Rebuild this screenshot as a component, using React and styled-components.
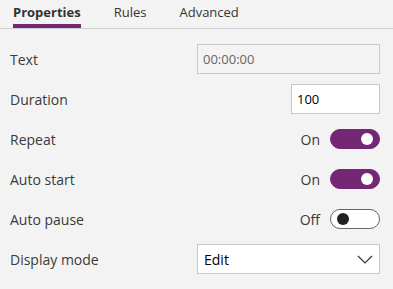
import React, { useState } from 'react';
import styled, { createGlobalStyle } from 'styled-components';

const GlobalStyle = createGlobalStyle`
  html, body {
    margin: 0;
    padding: 0;
    background: #f3f3f3;
  }
  body {
    font-family: "Open Sans", "Noto Sans", sans-serif;
    color: #333;
  }
`;

const Panel = styled.div`
  width: 393px;
  height: 289px;
  background: #f3f3f3;
  overflow: hidden;
`;

const TabBar = styled.div`
  display: flex;
  gap: 33px;
  height: 28px;
  padding-left: 13px;
  border-bottom: 1px solid #d0d0d0;
`;

const Tab = styled.div`
  font-size: 13px;
  line-height: 24px;
  font-weight: ${(p) => (p.active ? 700 : 400)};
  color: #333;
  cursor: pointer;

  &::after {
    content: '';
    display: ${(p) => (p.active ? 'block' : 'none')};
    height: 4px;
    background: #742774;
  }
`;

const Content = styled.div`
  padding: 10px 13px 0 10px;
`;

const Row = styled.div`
  display: flex;
  align-items: center;
  justify-content: space-between;
  height: 40px;
`;

const Label = styled.span`
  font-size: 14px;
  color: #3a3a3a;
`;

const TextBox = styled.input`
  box-sizing: border-box;
  width: ${(p) => p.width}px;
  height: 30px;
  padding: 0 5px;
  border: 1px solid #c8c8c8;
  background: ${(p) => (p.disabled ? '#f3f3f3' : '#fff')};
  color: ${(p) => (p.disabled ? '#666' : '#000')};
  font-family: inherit;
  font-size: 13px;
  outline: none;
`;

const ToggleWrap = styled.div`
  display: flex;
  align-items: center;
  gap: 10px;
  font-size: 14px;
  color: #3a3a3a;
`;

const Track = styled.button`
  position: relative;
  box-sizing: border-box;
  width: 50px;
  height: 20px;
  padding: 0;
  border-radius: 10px;
  border: 1px solid ${(p) => (p.on ? '#742774' : '#666')};
  background: ${(p) => (p.on ? '#742774' : '#fff')};
  cursor: pointer;
`;

const Knob = styled.span`
  position: absolute;
  top: 3px;
  left: ${(p) => (p.on ? '30px' : '6px')};
  width: 12px;
  height: 12px;
  border-radius: 50%;
  background: ${(p) => (p.on ? '#fff' : '#222')};
`;

const Select = styled.div`
  box-sizing: border-box;
  width: 183px;
  height: 30px;
  display: flex;
  align-items: center;
  justify-content: space-between;
  padding: 0 6px 0 6px;
  border: 1px solid #c8c8c8;
  background: #fff;
  font-size: 14px;
  color: #000;
`;

const Toggle = ({ on, onChange }) => (
  <ToggleWrap>
    {on ? 'On' : 'Off'}
    <Track on={on} onClick={() => onChange(!on)}>
      <Knob on={on} />
    </Track>
  </ToggleWrap>
);

const Chevron = () => (
  <svg width="16" height="9" viewBox="0 0 16 9">
    <path d="M1 1 L8 8 L15 1" fill="none" stroke="#333" strokeWidth="1.2" />
  </svg>
);

const App = () => {
  const [duration, setDuration] = useState('100');
  const [repeat, setRepeat] = useState(true);
  const [autoStart, setAutoStart] = useState(true);
  const [autoPause, setAutoPause] = useState(false);

  return (
    <Panel>
      <GlobalStyle />
      <TabBar>
        <Tab active>Properties</Tab>
        <Tab>Rules</Tab>
        <Tab>Advanced</Tab>
      </TabBar>
      <Content>
        <Row>
          <Label>Text</Label>
          <TextBox width={183} value="00:00:00" disabled readOnly />
        </Row>
        <Row>
          <Label>Duration</Label>
          <TextBox width={89} value={duration} onChange={(e) => setDuration(e.target.value)} />
        </Row>
        <Row>
          <Label>Repeat</Label>
          <Toggle on={repeat} onChange={setRepeat} />
        </Row>
        <Row>
          <Label>Auto start</Label>
          <Toggle on={autoStart} onChange={setAutoStart} />
        </Row>
        <Row>
          <Label>Auto pause</Label>
          <Toggle on={autoPause} onChange={setAutoPause} />
        </Row>
        <Row>
          <Label>Display mode</Label>
          <Select>
            Edit
            <Chevron />
          </Select>
        </Row>
      </Content>
    </Panel>
  );
};

export default App;
